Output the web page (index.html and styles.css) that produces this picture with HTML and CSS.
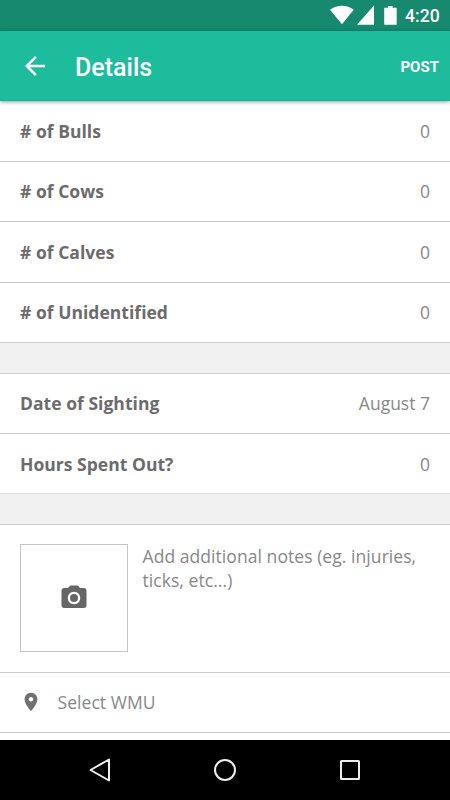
FILE: index.html
```html
<!DOCTYPE html>
<html lang="en">
<head>
<meta charset="utf-8">
<title>Details</title>
<link rel="stylesheet" href="styles.css">
</head>
<body>
<div class="screen">
  <div class="status">
    <svg width="75" height="31" viewBox="0 0 75 31" fill="#fff">
      <path d="M0 9.800C7 4.400 17 4.400 23.700 9.800L12 24.300Z"/>
      <path d="M27 24.800L44 5.500V24.800Z"/>
      <path d="M58 6h4.600v1.800H66.700v17H54.200v-17H58Z"/>
    </svg>
    <span class="time">4:20</span>
  </div>
  <header class="appbar">
    <svg class="back" width="30" height="30" viewBox="0 0 24 24" fill="#fff"><path d="M20 11H7.830l5.590-5.590L12 4l-8 8 8 8 1.410-1.410L7.830 13H20v-2z"/></svg>
    <h1 class="title">Details</h1>
    <span class="post">POST</span>
  </header>
  <main class="content">
    <div class="row tall"><span class="label"># of Bulls</span><span class="value">0</span></div>
    <div class="row"><span class="label"># of Cows</span><span class="value">0</span></div>
    <div class="row tall"><span class="label"># of Calves</span><span class="value">0</span></div>
    <div class="row"><span class="label"># of Unidentified</span><span class="value">0</span></div>
    <div class="gap"></div>
    <div class="row"><span class="label">Date of Sighting</span><span class="value">August 7</span></div>
    <div class="row last"><span class="label">Hours Spent Out?</span><span class="value">0</span></div>
    <div class="gap"></div>
    <div class="notes">
      <div class="photo">
        <svg width="30" height="30" viewBox="0 0 24 24" fill="#666"><circle cx="12" cy="12" r="3.200"/><path d="M9 2L7.170 4H4c-1.100 0-2 .9-2 2v12c0 1.100.9 2 2 2h16c1.100 0 2-.9 2-2V6c0-1.100-.9-2-2-2h-3.170L15 2H9zm3 15c-2.760 0-5-2.240-5-5s2.240-5 5-5 5 2.240 5 5-2.240 5-5 5z"/></svg>
      </div>
      <p class="hint">Add additional notes (eg. injuries, ticks, etc...)</p>
    </div>
    <div class="row wmu">
      <svg width="22" height="22" viewBox="0 0 24 24" fill="#707070"><path d="M12 2C8.130 2 5 5.130 5 9c0 5.250 7 13 7 13s7-7.750 7-13c0-3.870-3.130-7-7-7zm0 9.500c-1.380 0-2.500-1.120-2.500-2.500s1.120-2.500 2.500-2.500 2.500 1.120 2.500 2.500-1.120 2.500-2.500 2.500z"/></svg>
      <span class="value">Select WMU</span>
    </div>
  </main>
  <nav class="navbar">
    <svg width="30" height="30" viewBox="0 0 30 30"><path d="M5.500 15L24 4.500V25.500Z"/></svg>
    <svg width="30" height="30" viewBox="0 0 30 30"><circle cx="15" cy="15" r="10"/></svg>
    <svg width="30" height="30" viewBox="0 0 30 30"><rect x="6" y="6" width="18" height="18" rx=".5"/></svg>
  </nav>
</div>
</body>
</html>
```
FILE: styles.css
```css
* { box-sizing: border-box; }
body { margin: 0; font-family: "Open Sans", "Noto Sans", sans-serif; }
.screen {
  width: 450px;
  height: 800px;
  display: flex;
  flex-direction: column;
  overflow: hidden;
  background: #fff;
}
.status {
  height: 31px;
  flex: none;
  display: flex;
  align-items: center;
  justify-content: flex-end;
  padding-right: 10px;
  background: #16896f;
  color: #fff;
}
.time {
  width: 35px;
  font: 500 17.5px/31px Roboto, sans-serif;
  letter-spacing: .1px;
  padding-top: 2px;
}
.appbar {
  height: 70px;
  flex: none;
  display: flex;
  align-items: center;
  padding: 0 11px 0 20px;
  background: #1dbc9c;
  border-bottom: 1px solid #14b393;
  box-shadow: 0 1px 4px rgba(0, 0, 0, .4);
  color: #fff;
  z-index: 1;
}
.title {
  flex: 1;
  margin: 5px 0 0 25px;
  font: 500 25px/30px Roboto, sans-serif;
}
.post { font: 700 15px/20px Roboto, sans-serif; margin-top: 2px; }
.content { flex: 1; min-height: 0; overflow: hidden; }
.row {
  height: 60px;
  display: flex;
  align-items: center;
  justify-content: space-between;
  padding: 0 20px 1px;
  border-bottom: 1px solid #ccc;
  font-size: 17.5px;
  line-height: 24px;
}
.tall { height: 61px; }
.last { padding-bottom: 0; border-color: #dedede; }
.label { font-weight: 700; color: #6c6c6c; letter-spacing: .03px; }
.value { color: #888; }
.gap {
  height: 31px;
  background: #f1f1f1;
  border-bottom: 1px solid #ccc;
}
.notes {
  height: 148px;
  display: flex;
  gap: 14.5px;
  padding: 19px 20px;
  border-bottom: 1px solid #ccc;
}
.photo {
  width: 108px;
  height: 108px;
  flex: none;
  display: flex;
  align-items: center;
  justify-content: center;
  padding-right: 1px;
  border: 1px solid #c4c4c4;
}
.hint {
  margin: 0;
  font-size: 17.5px;
  line-height: 24px;
  letter-spacing: .06px;
  color: #888;
}
.wmu { justify-content: flex-start; gap: 15.5px; }
.wmu .value { letter-spacing: .06px; }
.navbar {
  height: 60px;
  flex: none;
  display: flex;
  align-items: center;
  justify-content: space-between;
  padding: 0 85px;
  background: #000;
}
.navbar svg { fill: none; stroke: #eee; stroke-width: 2; stroke-linejoin: round; }
```
